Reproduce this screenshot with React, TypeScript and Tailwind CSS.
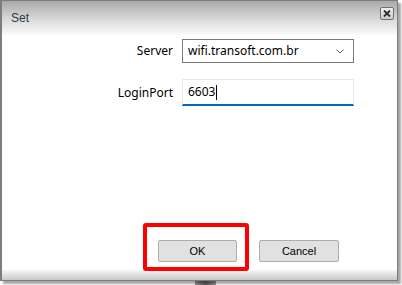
import React from 'react';

const CloseButton: React.FC = () => (
  <div className="w-[14px] h-[13px] border border-[#6f6f6f] rounded-[2px] bg-gradient-to-b from-[#f0f0f0] to-[#cacaca] flex items-center justify-center">
    <svg width="8" height="7" viewBox="0 0 8 7">
      <path d="M1 0.5 L7 6.5 M7 0.5 L1 6.5" stroke="#2b2b2b" strokeWidth="1.8" />
    </svg>
  </div>
);

const App: React.FC = () => {
  return (
    <div className="w-[402px] h-[285px] bg-white relative overflow-hidden">
      <div className="relative w-[398px] h-[281px] border border-[#7d7d7d] border-l-2 bg-white shadow-[3px_3px_2px_rgba(0,0,0,0.35)] flex flex-col">
        {/* title bar */}
        <div className="h-[34px] shrink-0 bg-gradient-to-b from-[#a9a9a9] via-[#d6d6d6] to-[#fbfbfb] flex items-start justify-between pl-[9px] pr-[3px] pt-[6px]">
          <span className="text-[12px] leading-[15px] mt-[4px] text-[#2f3b4a] font-['Liberation_Sans',sans-serif]">Set</span>
          <CloseButton />
        </div>

        {/* form */}
        <div className="flex-1 flex flex-col">
          <div className="grid grid-cols-[171px_172px] gap-x-[9px] gap-y-[16px] mt-[4px] font-['Noto_Sans',sans-serif] text-[12px] text-black">
            <div className="flex items-center justify-end h-[24px]">Server</div>
            <div className="h-[24px] border border-[#7a7a7a] flex items-center justify-between pl-[5px] pr-[9px]">
              <span>wifi.transoft.com.br</span>
              <svg width="8" height="5" viewBox="0 0 8 5">
                <path d="M0.5 0.5 L4 4 L7.5 0.5" stroke="#606060" fill="none" strokeWidth="1" />
              </svg>
            </div>
            <div className="flex items-center justify-end h-[27px] pt-[1px]">LoginPort</div>
            <div className="h-[27px] border border-[#e6e6e6] border-b-2 border-b-[#0067c0] flex items-center pl-[5px]">
              <span>6603</span>
              <span className="w-px h-[15px] bg-black ml-[1px]" />
            </div>
          </div>

          <div className="flex-1" />

          {/* buttons */}
          <div className="flex gap-[22px] pl-[156px] pb-[8px] font-['Liberation_Sans',sans-serif] text-[11px] text-black">
            <button className="w-[79px] h-[22px] bg-[#e1e1e1] border border-[#adadad] rounded-[2px]">OK</button>
            <button className="w-[80px] h-[22px] bg-[#e1e1e1] border border-[#adadad] rounded-[2px]">Cancel</button>
          </div>

          {/* bottom frame */}
          <div className="h-[10px] bg-gradient-to-b from-[#f6f6f6] to-[#c9c9c9]" />
        </div>

        {/* highlight annotation */}
        <div className="absolute left-[141px] top-[222px] w-[106px] h-[48px] border-4 border-[#ff0000] rounded-[3px]" />
      </div>

      <div className="ml-[195px] w-[21px] h-[4px] bg-gradient-to-r from-[#9a9a9a] via-[#5f5f5f] to-[#9a9a9a]" />
    </div>
  );
};

export default App;
